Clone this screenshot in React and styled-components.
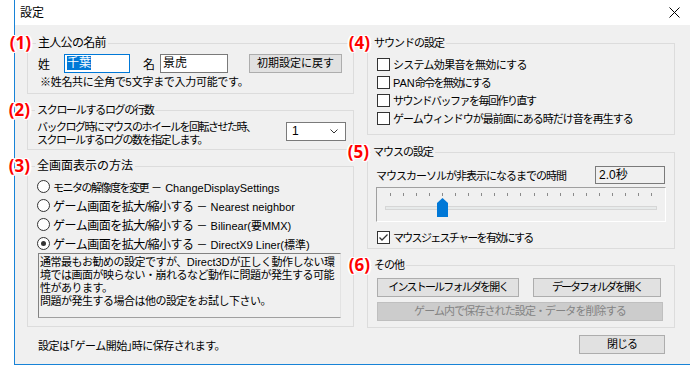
import React from 'react';
import styled, {createGlobalStyle} from 'styled-components';

const GlobalStyle = createGlobalStyle`
  html, body { margin:0; padding:0; background:#fff; overflow:hidden; }
  body {
    font-family:"Liberation Sans","Noto Sans CJK JP",sans-serif;
    font-size:11px;
    color:#000;
    letter-spacing:-1px;
  }
`;

const Window = styled.div`
  margin-left:14px;
  width:676px;
  height:365px;
  box-sizing:border-box;
  border-left:1px solid #1883d7;
  border-bottom:1px solid #1883d7;
  background:#f0f0f0;
  display:flex;
  flex-direction:column;
`;

const TitleBar = styled.div`
  height:25px;
  flex:none;
  background:#fff;
  display:flex;
  align-items:center;
  justify-content:space-between;
  padding:0 10px 0 5px;
  font-size:12px;
  line-height:16px;
  letter-spacing:0;
`;

const Client = styled.div`
  display:grid;
  grid-template-columns:327px 308px;
  column-gap:13px;
  padding:10px 0 0 12px;
`;

const Column = styled.div`
  display:flex;
  flex-direction:column;
`;

const Group = styled.fieldset`
  margin:${p => p.$mt || 0}px 0 0;
  padding:${p => p.$pad};
  border:1px solid #dcdcdc;
  min-width:0;
  display:flex;
  flex-direction:column;
`;

const Legend = styled.legend`
  position:relative;
  margin-left:${p => p.$indent}px;
  padding:0 2px;
  font-size:${p => p.$fs}px;
  line-height:16px;
  letter-spacing:${p => p.$ls}px;
  white-space:nowrap;
`;

const Badge = styled.span`
  position:absolute;
  right:calc(100% + ${p => p.$gap}px);
  top:-2px;
  font-family:"Noto Sans","DejaVu Sans",sans-serif;
  font-size:17px;
  font-weight:bold;
  line-height:20px;
  letter-spacing:0;
  color:#ff0000;
  white-space:nowrap;
  text-shadow:1px 0 #fff,-1px 0 #fff,0 1px #fff,0 -1px #fff,1px 1px #fff,-1px -1px #fff,1px -1px #fff,-1px 1px #fff,2px 0 #fff,-2px 0 #fff;
`;

const Latin = styled.span`
  letter-spacing:0;
  font-size:${p => p.$fs ? p.$fs + 'px' : 'inherit'};
`;

// 「」 drawn half-width as in the original UI font
const Bracket = styled.span`
  font-feature-settings:"halt";
`;

const NameRow = styled.div`
  display:flex;
  align-items:center;
  height:19px;
  font-size:12px;
  letter-spacing:0;
`;

const FieldLabel = styled.span`
  width:${p => p.$w}px;
  margin-left:${p => p.$ml || 0}px;
  flex:none;
`;

const Field = styled.div`
  box-sizing:border-box;
  width:${p => p.$w}px;
  height:19px;
  border:1px solid ${p => p.$focused ? '#0078d7' : '#7a7a7a'};
  background:#fff;
  padding:0 2px;
  line-height:17px;
  flex:none;
`;

const Selected = styled.span`
  background:#0078d7;
  color:#fff;
`;

const Button = styled.button`
  box-sizing:border-box;
  width:${p => p.$w ? p.$w + 'px' : 'auto'};
  height:19px;
  margin-left:${p => p.$ml || 0}px;
  padding:0;
  border:1px solid #adadad;
  background:#e1e1e1;
  font-family:inherit;
  font-size:11px;
  line-height:17px;
  letter-spacing:${p => p.$ls ?? -1}px;
  white-space:nowrap;
  color:#000;
  flex:none;
  &:disabled{
    background:#cccccc;
    border-color:#bfbfbf;
    color:#838383;
  }
`;

const Note = styled.div`
  margin:2px 0 0 2px;
  line-height:14px;
  letter-spacing:-0.3px;
  white-space:nowrap;
`;

const ScrollRow = styled.div`
  display:flex;
  justify-content:space-between;
  align-items:flex-start;
`;

const Lines = styled.div`
  line-height:13px;
  white-space:nowrap;
  letter-spacing:-1.5px;
`;

const Select = styled.div`
  box-sizing:border-box;
  width:60px;
  height:19px;
  margin-top:1px;
  border:1px solid #7a7a7a;
  background:#fff;
  display:flex;
  align-items:center;
  justify-content:space-between;
  padding:0 7px 0 5px;
  font-size:12px;
  line-height:17px;
  letter-spacing:0;
`;

const OptionRow = styled.label`
  display:flex;
  align-items:center;
  height:${p => p.$h}px;
  white-space:nowrap;
  font-size:${p => p.$fs || 11}px;
  letter-spacing:${p => p.$ls ?? -1}px;
`;

const OptionText = styled.span`
  white-space:pre;
`;

const Radio = styled.span`
  box-sizing:border-box;
  width:13px;
  height:13px;
  margin-right:3px;
  border:1px solid #333;
  border-radius:50%;
  background:#fff;
  display:flex;
  align-items:center;
  justify-content:center;
  flex:none;
  &::after{
    content:'';
    display:${p => p.$checked ? 'block' : 'none'};
    width:5px;
    height:5px;
    border-radius:50%;
    background:#333;
  }
`;

const Check = styled.span`
  box-sizing:border-box;
  width:13px;
  height:13px;
  margin-right:3px;
  border:1px solid #333;
  background:#fff;
  display:flex;
  align-items:center;
  justify-content:center;
  flex:none;
`;

const InfoBox = styled.div`
  box-sizing:border-box;
  height:65px;
  margin-left:1px;
  width:303px;
  border-style:solid;
  border-width:1px;
  border-color:#828282 #e3e3e3 #a0a0a0 #828282;
  padding:2px 0 0 1px;
  line-height:13px;
  white-space:nowrap;
  overflow:hidden;
  letter-spacing:-0.5px;
`;

const TimeRow = styled.div`
  display:flex;
  justify-content:space-between;
  align-items:center;
  height:18px;
  padding-right:1px;
  white-space:nowrap;
`;

const ReadBox = styled.div`
  box-sizing:border-box;
  width:70px;
  height:18px;
  border:1px solid #7a7a7a;
  background:#f0f0f0;
  padding-left:3px;
  font-size:12px;
  line-height:16px;
  letter-spacing:0;
`;

const Slider = styled.div`
  position:relative;
  box-sizing:border-box;
  height:35px;
  margin-top:3px;
  border-style:solid;
  border-width:1px;
  border-color:#a0a0a0 #fff #fff #a0a0a0;
`;

const Ticks = styled.div`
  display:flex;
  justify-content:space-between;
  margin:5px 13px 0;
  height:3px;
`;

const Tick = styled.span`
  width:1px;
  height:3px;
  background:#8a8a8a;
`;

const Channel = styled.div`
  box-sizing:border-box;
  height:4px;
  margin:10px 8px 0;
  border:1px solid #d6d6d6;
  background:#e7eaea;
`;

const Thumb = styled.svg`
  position:absolute;
  top:10px;
`;

const ButtonRow = styled.div`
  display:flex;
  justify-content:space-between;
  margin-right:2px;
`;

const Footer = styled.div`
  grid-column:1 / 3;
  display:flex;
  justify-content:space-between;
  align-items:center;
  margin-top:7px;
  padding:0 10px 0 11px;
  white-space:nowrap;
`;

const FooterText = styled.span`
  letter-spacing:-0.5px;
`;

const ticks = Array.from({length: 21});
const sliderValue = 4;

function GroupBox({n, title, indent, gap, pad, mt, fs = 11, ls = -1, children}) {
  return (
    <Group $pad={pad} $mt={mt}>
      <Legend $indent={indent} $fs={fs} $ls={ls}>
        <Badge $gap={gap}>({n})</Badge>
        {title}
      </Legend>
      {children}
    </Group>
  );
}

function RadioOption({checked, ls, fs, label, latin}) {
  return (
    <OptionRow $h={19} $ls={ls} $fs={fs}>
      <Radio $checked={checked}/>
      <OptionText>{label}<Latin $fs={11}> － {latin}</Latin></OptionText>
    </OptionRow>
  );
}

function CheckOption({checked, ls, children, style}) {
  return (
    <OptionRow $h={18} $ls={ls} style={style}>
      <Check>
        {checked && (
          <svg width="11" height="11" viewBox="0 0 11 11">
            <polyline points="1.5,5.5 4,8 9.5,2.5" stroke="#333" strokeWidth="1.3" fill="none"/>
          </svg>
        )}
      </Check>
      <OptionText>{children}</OptionText>
    </OptionRow>
  );
}

export default function App() {
  return (
    <>
      <GlobalStyle/>
      <Window>
        <TitleBar>
          <span>設定</span>
          <svg width="11" height="11" viewBox="0 0 11 11">
            <path d="M0.5 0.5 L10.5 10.5 M10.5 0.5 L0.5 10.5" stroke="#000" strokeWidth="1" fill="none"/>
          </svg>
        </TitleBar>
        <Client>
          <Column>
            <GroupBox n="1" title="主人公の名前" indent={-2} gap={5} fs={12} ls={-0.7} pad="3px 10px 4px 10px">
              <NameRow>
                <FieldLabel $w={26}>姓</FieldLabel>
                <Field $w={66} $focused><Selected>千葉</Selected></Field>
                <FieldLabel $w={17} $ml={13}>名</FieldLabel>
                <Field $w={68}>景虎</Field>
                <Button $w={93} $ml={21} $ls={0}>初期設定に戻す</Button>
              </NameRow>
              <Note>※姓名共に全角で<Latin>5</Latin>文字まで入力可能です。</Note>
            </GroupBox>
            <GroupBox n="2" title="スクロールするログの行数" indent={-2} gap={5} ls={-1.3} mt={8} pad="3px 7px 2px 9px">
              <ScrollRow>
                <Lines>
                  <div>バックログ時にマウスのホイールを回転させた時、</div>
                  <div>スクロールするログの数を指定します。</div>
                </Lines>
                <Select>
                  <span>1</span>
                  <svg width="8" height="5" viewBox="0 0 8 5">
                    <polyline points="0.5,0.5 4,4 7.5,0.5" stroke="#333" strokeWidth="1" fill="none"/>
                  </svg>
                </Select>
              </ScrollRow>
            </GroupBox>
            <GroupBox n="3" title="全画面表示の方法" indent={-2} gap={5} fs={12} ls={0} mt={8} pad="3px 12px 8px 9px">
              <RadioOption ls={-1.5} label="モニタの解像度を変更" latin="ChangeDisplaySettings"/>
              <RadioOption ls={-0.5} fs={12} label="ゲーム画面を拡大/縮小する" latin="Nearest neighbor"/>
              <RadioOption ls={-0.5} fs={12} label="ゲーム画面を拡大/縮小する" latin="Bilinear(要MMX)"/>
              <RadioOption checked ls={-0.5} fs={12} label="ゲーム画面を拡大/縮小する" latin="DirectX9 Liner(標準)"/>
              <InfoBox>
                <div>通常最もお勧めの設定ですが、<Latin>Direct3D</Latin>が正しく動作しない環</div>
                <div>境では画面が映らない・崩れるなど動作に問題が発生する可能</div>
                <div>性があります。</div>
                <div>問題が発生する場合は他の設定をお試し下さい。</div>
              </InfoBox>
            </GroupBox>
          </Column>
          <Column>
            <GroupBox n="4" title="サウンドの設定" indent={-5} gap={2} pad="4px 9px 7px 9px">
              <CheckOption ls={-0.7}>システム効果音を無効にする</CheckOption>
              <CheckOption ls={-1.6}><Latin>PAN</Latin>命令を無効にする</CheckOption>
              <CheckOption ls={-1.5}>サウンドバッファを毎回作り直す</CheckOption>
              <CheckOption>ゲームウィンドウが最前面にある時だけ音を再生する</CheckOption>
            </GroupBox>
            <GroupBox n="5" title="マウスの設定" indent={-5} gap={2} mt={9} pad="6px 8px 2px 8px">
              <TimeRow>
                <span>マウスカーソルが非表示になるまでの時間</span>
                <ReadBox>2.0秒</ReadBox>
              </TimeRow>
              <Slider>
                <Ticks>
                  {ticks.map((_, i) => <Tick key={i}/>)}
                </Ticks>
                <Channel/>
                <Thumb width="11" height="19" viewBox="0 0 11 19" style={{left: 13 + sliderValue * 261 / 20 - 5}}>
                  <polygon points="0,5 5.5,0 11,5 11,19 0,19" fill="#0078d7"/>
                </Thumb>
              </Slider>
              <CheckOption checked ls={-1.7} style={{marginTop: 6, marginLeft: 1}}>マウスジェスチャーを有効にする</CheckOption>
            </GroupBox>
            <GroupBox n="6" title="その他" indent={-5} gap={2} mt={8} pad="5px 11px 6px 9px">
              <ButtonRow>
                <Button $w={142} $ls={-1.8}>インストールフォルダを開く</Button>
                <Button $w={128} $ls={-2}>データフォルダを開く</Button>
              </ButtonRow>
              <Button disabled $ls={-0.9} style={{marginTop: 5}}>ゲーム内で保存された設定・データを削除する</Button>
            </GroupBox>
          </Column>
          <Footer>
            <FooterText>設定は<Bracket>「</Bracket>ゲーム開始<Bracket>」</Bracket>時に保存されます。</FooterText>
            <Button $w={86}>閉じる</Button>
          </Footer>
        </Client>
      </Window>
    </>
  );
}
